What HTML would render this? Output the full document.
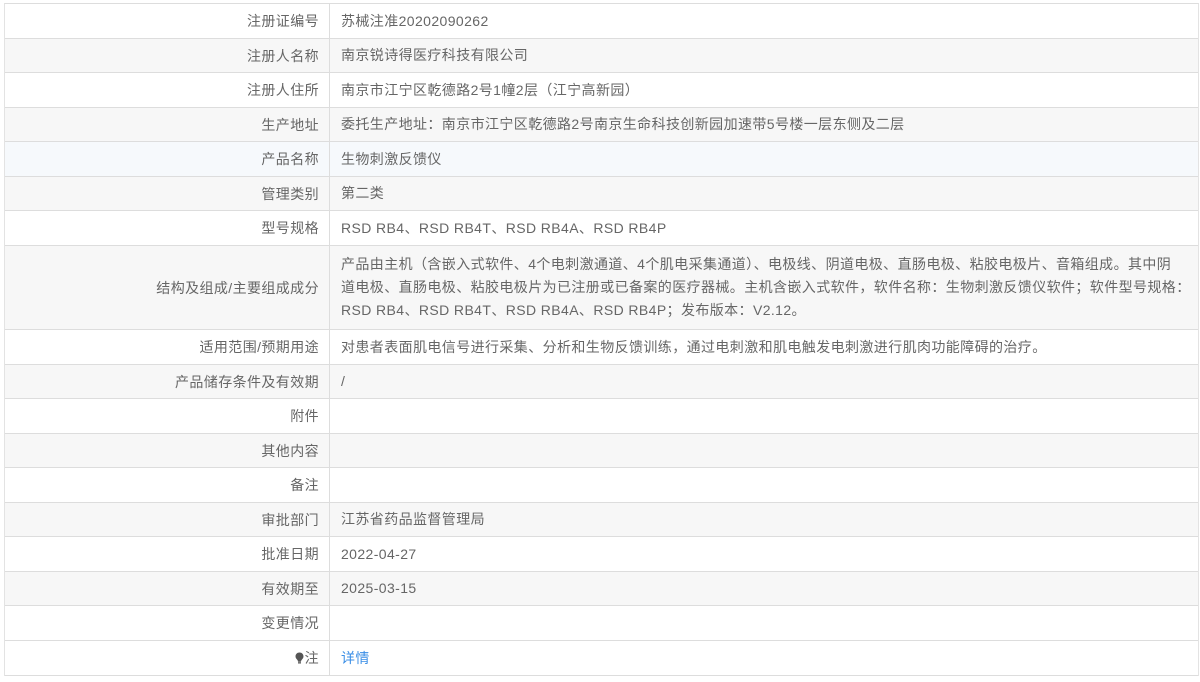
<!DOCTYPE html>
<html><head><meta charset="utf-8"><style>
body{margin:0;background:#fff;font-family:"Liberation Sans","Noto Sans CJK SC",sans-serif;font-size:14px;color:#666;letter-spacing:0.4px;}
.t{position:absolute;left:4px;top:3px;width:1193px;border-top:1px solid #ddd;border-left:1px solid #e3e3e3;border-right:1px solid #e3e3e3;}
.r{display:flex;border-bottom:1px solid #ddd;box-sizing:border-box;}
.r:nth-child(even){background:#f7f7f7;}
.r.h{background:#f6f9fc;}
.l{width:325px;flex:none;text-align:right;padding-right:10px;box-sizing:border-box;border-right:1px solid #ddd;display:flex;align-items:center;justify-content:flex-end;}
.v{flex:1;padding:0 10px 0 11px;display:flex;align-items:center;line-height:23px;}
.v.w{white-space:nowrap;padding-right:0;}
a{color:#3a8ee6;text-decoration:none;}
</style></head><body>
<div class="t">
<div class="r" style="height:35px"><div class="l">注册证编号</div><div class="v">苏械注准20202090262</div></div>
<div class="r" style="height:34px"><div class="l">注册人名称</div><div class="v">南京锐诗得医疗科技有限公司</div></div>
<div class="r" style="height:35px"><div class="l">注册人住所</div><div class="v">南京市江宁区乾德路2号1幢2层（江宁高新园）</div></div>
<div class="r" style="height:34px"><div class="l">生产地址</div><div class="v">委托生产地址：南京市江宁区乾德路2号南京生命科技创新园加速带5号楼一层东侧及二层</div></div>
<div class="r h" style="height:35px"><div class="l">产品名称</div><div class="v">生物刺激反馈仪</div></div>
<div class="r" style="height:34px"><div class="l">管理类别</div><div class="v">第二类</div></div>
<div class="r" style="height:35px"><div class="l">型号规格</div><div class="v">RSD RB4、RSD RB4T、RSD RB4A、RSD RB4P</div></div>
<div class="r" style="height:84px"><div class="l">结构及组成/主要组成成分</div><div class="v w"><div>产品由主机（含嵌入式软件、4个电刺激通道、4个肌电采集通道）、电极线、阴道电极、直肠电极、粘胶电极片、音箱组成。其中阴<br>道电极、直肠电极、粘胶电极片为已注册或已备案的医疗器械。主机含嵌入式软件，软件名称：生物刺激反馈仪软件；软件型号规格：<br>RSD RB4、RSD RB4T、RSD RB4A、RSD RB4P；发布版本：V2.12。</div></div></div>
<div class="r" style="height:35px"><div class="l">适用范围/预期用途</div><div class="v">对患者表面肌电信号进行采集、分析和生物反馈训练，通过电刺激和肌电触发电刺激进行肌肉功能障碍的治疗。</div></div>
<div class="r" style="height:34px"><div class="l">产品储存条件及有效期</div><div class="v">/</div></div>
<div class="r" style="height:35px"><div class="l">附件</div><div class="v"></div></div>
<div class="r" style="height:34px"><div class="l">其他内容</div><div class="v"></div></div>
<div class="r" style="height:35px"><div class="l">备注</div><div class="v"></div></div>
<div class="r" style="height:34px"><div class="l">审批部门</div><div class="v">江苏省药品监督管理局</div></div>
<div class="r" style="height:35px"><div class="l">批准日期</div><div class="v">2022-04-27</div></div>
<div class="r" style="height:34px"><div class="l">有效期至</div><div class="v">2025-03-15</div></div>
<div class="r" style="height:35px"><div class="l">变更情况</div><div class="v"></div></div>
<div class="r" style="height:35px;background:#fff"><div class="l"><svg width="9" height="12" viewBox="0 0 9 12" style="margin-right:1px"><path d="M4.5 0.5C2.2 0.5 0.5 2.2 0.5 4.4c0 1.6 1 2.6 1.8 3.5.5.6.7 1.2.7 1.8h3c0-.6.2-1.2.7-1.8.8-.9 1.8-1.9 1.8-3.5C8.5 2.2 6.8.5 4.5.5z" fill="#555"/><rect x="3" y="10.2" width="3" height="1.3" fill="#555"/></svg>注</div><div class="v"><a>详情</a></div></div>
</div>
</body></html>
